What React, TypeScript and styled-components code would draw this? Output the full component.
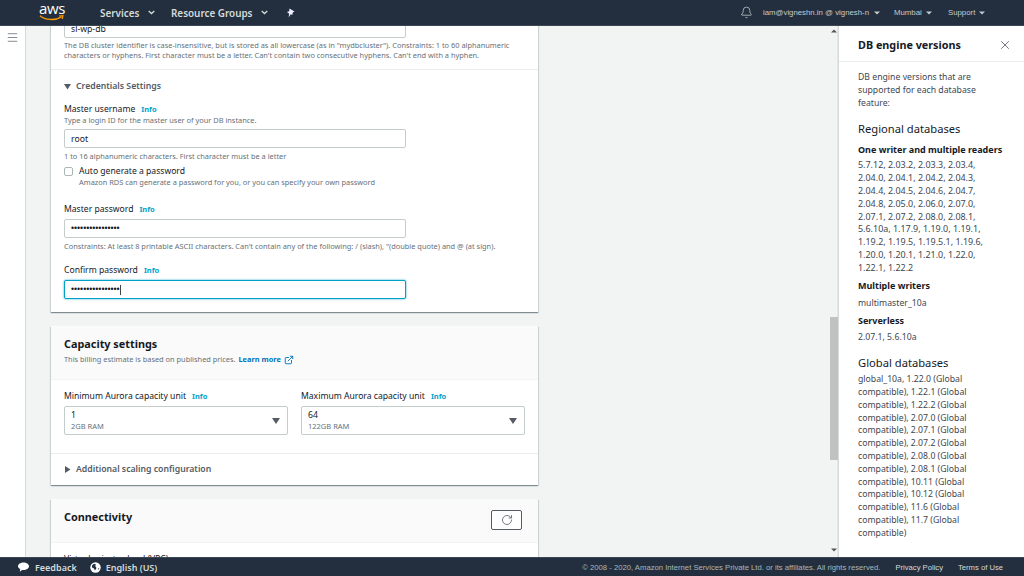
import React from "react";
import styled, { createGlobalStyle } from "styled-components";
import { Bell, X, Menu, RotateCw, ExternalLink } from "lucide-react";

const Global = createGlobalStyle`
  html, body { margin: 0; padding: 0; height: 576px; overflow: hidden; background: #f2f3f3; }
  * { box-sizing: border-box; }
  #root { height: 576px; }
`;
const Page = styled.div`
  width: 1024px; height: 576px; display: grid; grid-template-rows: 26px 531px 19px;
  font-family: "Noto Sans", "Open Sans", sans-serif; color: #16191f; overflow: hidden;
`;
const Header = styled.header`
  background: #232f3e; border-bottom: 1px solid #3b4754; display: flex; align-items: center; padding-left: 39px; color: #d5dbdb;
`;
const Logo = styled.div`
  width: 61px; height: 25px; position: relative; color: #fff; font: 400 15px/14px "Open Sans", sans-serif; letter-spacing: -0.4px; padding-top: 1px;
`;
const Smile = styled.svg`
  position: absolute; left: 0; top: 15px;
`;
const NavItem = styled.span<{ $w: number }>`
  width: ${p => p.$w}px; display: flex; align-items: center; font-size: 9.9px; font-weight: 600; color: #d5dbdb; white-space: nowrap;
`;
const Chevron = styled.svg<{ $gap: number }>`
  margin-left: ${p => p.$gap}px;
`;
const Spacer = styled.div`
  flex: 1;
`;
const TopLink = styled.span<{ $w: number }>`
  width: ${p => p.$w}px; display: flex; align-items: center; font: 400 7.8px "Liberation Sans", Arial, sans-serif; color: #c4cbcf; white-space: nowrap;
`;
const Caret = styled.svg<{ $gap: number }>`
  margin-left: ${p => p.$gap}px;
`;
const BellWrap = styled.span`
  width: 23px; display: flex; color: #d5dbdb;
`;
const Body = styled.div`
  display: flex; min-height: 0; overflow: hidden;
`;
const SideNav = styled.nav`
  width: 26px; background: #fff; border-right: 1px solid #d5dbdb; padding: 5px 0 0 6px; color: #545b64;
  svg { display: block; }
`;
const Scroller = styled.main`
  width: 804px; background: #f2f3f3; overflow: hidden; padding: 0 292px 0 25px; display: flex; flex-direction: column; gap: 14px;
`;
const ScrollTrack = styled.div`
  width: 8px; background: #f2f3f3; display: flex; flex-direction: column; align-items: center; padding-top: 3px;
  border-right: 1px solid #e4e6e6;
`;
const ScrollThumb = styled.div`
  width: 8px; height: 143px; background: #c1c1c1; margin: 284px 0 88px;
`;
const Card = styled.section<{ $pull?: number }>`
  flex: none; background: #fff; margin-top: ${p => p.$pull ?? 0}px;
  box-shadow: 0 1px 1px 0 rgba(0,28,36,.35), 1px 1px 1px 0 rgba(0,28,36,.1), -1px 1px 1px 0 rgba(0,28,36,.1);
`;
const Section = styled.div<{ $pad: string; $line?: boolean }>`
  padding: ${p => p.$pad}; border-bottom: ${p => (p.$line ? "1px solid #eaeded" : "none")};
`;
const Input = styled.div<{ $focus?: boolean; $mt?: number }>`
  width: 342px; height: 19px; margin-top: ${p => p.$mt ?? 0}px; background: #fff; display: flex; align-items: center; padding-left: 6px;
  border: 1px solid ${p => (p.$focus ? "#00a1c9" : "#c5cccc")}; border-radius: 2px; font-size: 8.7px; color: #16191f;
  box-shadow: ${p => (p.$focus ? "0 0 2px #00a1c9" : "0 0 0 0 transparent")};
`;
const Dots = styled.span`
  font-size: 8.7px; font-family: "Liberation Sans", sans-serif; line-height: 1;
`;
const Cursor = styled.span`
  width: 1px; height: 10px; background: #444;
`;
const Help = styled.div<{ $mt?: number }>`
  margin-top: ${p => p.$mt ?? 0}px; font-size: 7.4px; line-height: 10px; color: #687078; white-space: nowrap;
`;
const Expander = styled.div`
  display: flex; align-items: center; gap: 5px; font-size: 8.7px; font-weight: 600; line-height: 12px; color: #545b64; white-space: nowrap;
`;
const Label = styled.div<{ $mt?: number }>`
  margin-top: ${p => p.$mt ?? 0}px; font-size: 8.6px; line-height: 12px; color: #16191f; display: flex; align-items: center; white-space: nowrap;
`;
const Info = styled.span`
  margin-left: 6px; font-size: 7.5px; font-weight: 700; color: #00a1c9;
`;
const CheckRow = styled.div`
  display: flex; gap: 6px; margin-top: 4px;
`;
const Box = styled.span`
  width: 9px; height: 9px; margin-top: 2px; background: #fff; border: 1px solid #aab7b8; border-radius: 2px; flex: none;
`;
const CardHead = styled.div<{ $h: number }>`
  height: ${p => p.$h}px; background: #fafafa; border-bottom: 1px solid #f2f3f3; padding: 10px 13px 0; position: relative;
`;
const CardTitle = styled.h2`
  margin: 0; font-size: 10.85px; line-height: 16px; font-weight: 700; color: #16191f;
`;
const LearnMore = styled.span`
  color: #0073bb; font-weight: 700; margin-left: 1px;
`;
const Ext = styled.span`
  display: inline-flex; vertical-align: -3px; margin-left: 3px; color: #0073bb;
`;
const Cols = styled.div`
  display: grid; grid-template-columns: 224px 224px; gap: 13px; padding: 10px 0 0 13px; height: 74px; border-bottom: 1px solid #eaeded;
`;
const Select = styled.div`
  height: 29px; margin-top: 4px; border: 1px solid #c5cccc; border-radius: 2px; padding: 3px 0 0 6px; position: relative; background: #fff;
`;
const SelVal = styled.div`
  font-size: 8.7px; line-height: 11px; color: #16191f;
`;
const SelSub = styled.div`
  font-size: 7.5px; line-height: 11px; color: #687078;
`;
const SelArrow = styled.svg`
  position: absolute; right: 7px; top: 11px;
`;
const RefreshBtn = styled.button`
  position: absolute; right: 16px; top: 11px; width: 31px; height: 20px; background: #fff; border: 1px solid #545b64; border-radius: 2px;
  display: flex; align-items: center; justify-content: center; color: #545b64; padding: 0;
`;
const Panel = styled.aside`
  width: 186px; background: #fff; border-left: 1px solid #d5dbdb; flex: none;
`;
const PanelHead = styled.div`
  height: 36px; border-bottom: 1px solid #eaeded; display: flex; align-items: center; justify-content: space-between; padding: 2px 12px 0 19px;
`;
const PanelTitle = styled.h2`
  margin: 0; font-size: 10.8px; font-weight: 700; color: #16191f;
`;
const CloseBtn = styled.span`
  display: flex; color: #545b64;
`;
const PanelBody = styled.div`
  padding: 9px 17px 0 19px; font-size: 8.7px; line-height: 12.8px; color: #414750;
`;
const P = styled.p<{ $mt?: number }>`
  margin: ${p => p.$mt ?? 0}px 0 0;
`;
const VersionLines = styled.p<{ $mt: number }>`
  margin: ${p => p.$mt}px 0 0; font-size: 8.95px; white-space: pre-line;
`;
const H3 = styled.h3<{ $mt: number }>`
  margin: ${p => p.$mt}px 0 0; font-size: 11.2px; line-height: 16px; font-weight: 400; color: #16191f;
`;
const H4 = styled.h4<{ $mt: number }>`
  margin: ${p => p.$mt}px 0 0; font-size: 9px; line-height: 13px; font-weight: 700; color: #16191f;
`;
const Footer = styled.footer`
  background: #232f3e; border-top: 1px solid #3b4754; display: flex; align-items: center; padding: 0 21px 0 18px; color: #d5dbdb;
`;
const FootBtn = styled.span<{ $ml: number }>`
  margin-left: ${p => p.$ml}px; font-size: 9px; font-weight: 600; white-space: nowrap;
`;
const Globe = styled.svg`
  margin-left: 13px;
`;
const Legal = styled.span`
  font: 7.7px "Liberation Sans", Arial, sans-serif; color: #aab7b8; white-space: nowrap;
`;
const FootLink = styled.span`
  margin-left: 15px; font: 7.65px "Liberation Sans", Arial, sans-serif; color: #d5dbdb; white-space: nowrap;
`;

const Chev = ({ gap }: { gap: number }) => (
  <Chevron $gap={gap} width="7" height="5" viewBox="0 0 7 5"><path d="M.7 1l2.8 2.6L6.3 1" fill="none" stroke="#d5dbdb" strokeWidth="1.3" /></Chevron>
);
const Car = ({ gap }: { gap: number }) => (
  <Caret $gap={gap} width="6" height="4" viewBox="0 0 6 4"><path d="M0 .5h6L3 3.5z" fill="#c4cbcf" /></Caret>
);
const Tri = ({ right }: { right?: boolean }) => (
  <svg width="7" height="7" viewBox="0 0 7 7">
    <path d={right ? "M1 0l5.5 3.5L1 7z" : "M0 1h7L3.5 6.5z"} fill="#545b64" />
  </svg>
);

const versions = `5.7.12, 2.03.2, 2.03.3, 2.03.4,
2.04.0, 2.04.1, 2.04.2, 2.04.3,
2.04.4, 2.04.5, 2.04.6, 2.04.7,
2.04.8, 2.05.0, 2.06.0, 2.07.0,
2.07.1, 2.07.2, 2.08.0, 2.08.1,
5.6.10a, 1.17.9, 1.19.0, 1.19.1,
1.19.2, 1.19.5, 1.19.5.1, 1.19.6,
1.20.0, 1.20.1, 1.21.0, 1.22.0,
1.22.1, 1.22.2`;

export default function App() {
  return (
    <Page>
      <Global />
      <Header>
        <Logo>
          aws
          <Smile width="26" height="8" viewBox="0 0 26 8">
            <path d="M1 .8C6 5 16 6 22.5 1.9" fill="none" stroke="#f90" strokeWidth="1.3" />
            <path d="M20 1l4-.4-.8 3.400" fill="none" stroke="#f90" strokeWidth="1.1" />
          </Smile>
        </Logo>
        <NavItem $w={71}>Services<Chev gap={9} /></NavItem>
        <NavItem $w={115}>Resource Groups<Chev gap={9} /></NavItem>
        <svg width="9" height="10" viewBox="0 0 9 10"><path d="M3.5.5L8.5 3.6 6.8 4.6 6.3 7 4.6 6.3 2.8 9.5 3 5.5.9 4l2.3-.7z" fill="#eef" /></svg>
        <Spacer />
        <BellWrap><Bell size={13} strokeWidth={1.3} /></BellWrap>
        <TopLink $w={131}>iam@vigneshn.in @ vignesh-n<Car gap={5} /></TopLink>
        <TopLink $w={54}>Mumbai<Car gap={4} /></TopLink>
        <TopLink $w={76}>Support<Car gap={4} /></TopLink>
      </Header>
      <Body>
        <SideNav><Menu size={13} strokeWidth={1.3} /></SideNav>
        <Scroller>
          <Card $pull={-10}>
            <Section $pad="3px 13px 9px" $line>
              <Input>sl-wp-db</Input>
              <Help $mt={2}>The DB cluster identifier is case-insensitive, but is stored as all lowercase (as in "mydbcluster"). Constraints: 1 to 60 alphanumeric<br />characters or hyphens. First character must be a letter. Can't contain two consecutive hyphens. Can't end with a hyphen.</Help>
            </Section>
            <Section $pad="10px 13px 13px">
              <Expander><Tri />Credentials Settings</Expander>
              <Label $mt={11}>Master username<Info>Info</Info></Label>
              <Help>Type a login ID for the master user of your DB instance.</Help>
              <Input $mt={4}>root</Input>
              <Help $mt={3}>1 to 16 alphanumeric characters. First character must be a letter</Help>
              <CheckRow>
                <Box />
                <div>
                  <Label>Auto generate a password</Label>
                  <Help>Amazon RDS can generate a password for you, or you can specify your own password</Help>
                </div>
              </CheckRow>
              <Label $mt={16}>Master password<Info>Info</Info></Label>
              <Input $mt={4}><Dots>••••••••••••••••</Dots></Input>
              <Help $mt={3}>Constraints: At least 8 printable ASCII characters. Can't contain any of the following: / (slash), "(double quote) and @ (at sign).</Help>
              <Label $mt={13}>Confirm password<Info>Info</Info></Label>
              <Input $mt={4} $focus><Dots>••••••••••••••••</Dots><Cursor /></Input>
            </Section>
          </Card>
          <Card>
            <CardHead $h={54}>
              <CardTitle>Capacity settings</CardTitle>
              <Help $mt={2}>This billing estimate is based on published prices. <LearnMore>Learn more</LearnMore><Ext><ExternalLink size={10} strokeWidth={2.2} /></Ext></Help>
            </CardHead>
            <Cols>
              <div>
                <Label>Minimum Aurora capacity unit<Info>Info</Info></Label>
                <Select>
                  <SelVal>1</SelVal>
                  <SelSub>2GB RAM</SelSub>
                  <SelArrow width="8" height="6" viewBox="0 0 8 6"><path d="M0 0h8L4 6z" fill="#545b64" /></SelArrow>
                </Select>
              </div>
              <div>
                <Label>Maximum Aurora capacity unit<Info>Info</Info></Label>
                <Select>
                  <SelVal>64</SelVal>
                  <SelSub>122GB RAM</SelSub>
                  <SelArrow width="8" height="6" viewBox="0 0 8 6"><path d="M0 0h8L4 6z" fill="#545b64" /></SelArrow>
                </Select>
              </div>
            </Cols>
            <Section $pad="9px 13px 10px">
              <Expander><Tri right />Additional scaling configuration</Expander>
            </Section>
          </Card>
          <Card>
            <CardHead $h={44}>
              <CardTitle>Connectivity</CardTitle>
              <RefreshBtn aria-label="Refresh"><RotateCw size={12} strokeWidth={1.6} /></RefreshBtn>
            </CardHead>
            <Section $pad="10px 13px 8px">
              <Label>Virtual private cloud (VPC)</Label>
            </Section>
          </Card>
        </Scroller>
        <ScrollTrack>
          <svg width="6" height="4" viewBox="0 0 6 4"><path d="M0 3.5h6L3 .5z" fill="#555" /></svg>
          <ScrollThumb />
          <svg width="6" height="4" viewBox="0 0 6 4"><path d="M0 .5h6L3 3.5z" fill="#555" /></svg>
        </ScrollTrack>
        <Panel>
          <PanelHead>
            <PanelTitle>DB engine versions</PanelTitle>
            <CloseBtn><X size={14} strokeWidth={1.4} /></CloseBtn>
          </PanelHead>
          <PanelBody>
            <P>DB engine versions that are supported for each database feature:</P>
            <H3 $mt={12}>Regional databases</H3>
            <H4 $mt={6}>One writer and multiple readers</H4>
            <VersionLines $mt={3}>{versions}</VersionLines>
            <H4 $mt={4}>Multiple writers</H4>
            <P $mt={5}>multimaster_10a</P>
            <H4 $mt={5}>Serverless</H4>
            <P $mt={4}>2.07.1, 5.6.10a</P>
            <H3 $mt={11}>Global databases</H3>
            <P $mt={2}>global_10a, 1.22.0 (Global compatible), 1.22.1 (Global compatible), 1.22.2 (Global compatible), 2.07.0 (Global compatible), 2.07.1 (Global compatible), 2.07.2 (Global compatible), 2.08.0 (Global compatible), 2.08.1 (Global compatible), 10.11 (Global compatible), 10.12 (Global compatible), 11.6 (Global compatible), 11.7 (Global compatible)</P>
          </PanelBody>
        </Panel>
      </Body>
      <Footer>
        <svg width="11" height="10" viewBox="0 0 11 10"><path d="M5.5.5C8.5.5 11 2.2 11 4.3S8.5 8 5.5 8c-.5 0-1 0-1.400-.1L1.800 9.700l.4-2.600C.8 6.400 0 5.400 0 4.300 0 2.200 2.500.5 5.500.5z" fill="#fff" /></svg>
        <FootBtn $ml={6}>Feedback</FootBtn>
        <Globe width="11" height="11" viewBox="0 0 11 11"><circle cx="5.5" cy="5.5" r="5.2" fill="#fff" /><path d="M2 3.5l2-1.700 2 .6-.8 1.600L6.500 6 5 8.500 3.700 6.200 2 5.500zM8 6.500l1.300-.6-.8 2.200z" fill="#232f3e" /></Globe>
        <FootBtn $ml={5}>English (US)</FootBtn>
        <Spacer />
        <Legal>© 2008 - 2020, Amazon Internet Services Private Ltd. or its affiliates. All rights reserved.</Legal>
        <FootLink>Privacy Policy</FootLink>
        <FootLink>Terms of Use</FootLink>
      </Footer>
    </Page>
  );
}
